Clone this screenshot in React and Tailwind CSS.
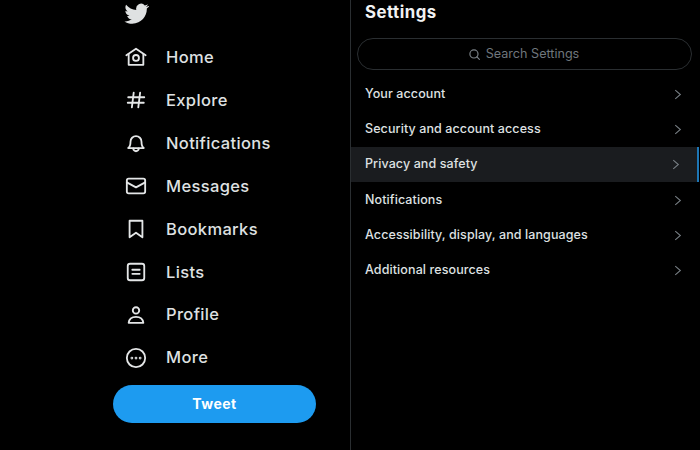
const F = { fontFamily: 'Inter, "Liberation Sans", sans-serif' };
const I = ({ children }) => (
  <svg viewBox="0 0 24 24" width="22" height="22" fill="none" stroke="#e4e6e7" strokeWidth="2" strokeLinecap="round" strokeLinejoin="round">{children}</svg>
);
const nav = [
  ['Home', <I><path d="M1.500 10 12 3 22.500 10" /><path d="M4 8.500V20.500H20V8.500" /><circle cx="12" cy="13" r="3.200" /></I>],
  ['Explore', <I><path d="M9.500 4 7.500 20M16.500 4l-2 16M3.500 9h17.500M3 15h17.500" /></I>],
  ['Notifications', <I><path d="M3.500 17.500c1.500-1 2.500-2.500 2.500-7a6 6 0 0 1 12 0c0 4.500 1 6 2.500 7Z" /><path d="M9 18c0 1.600 1.400 3 3 3s3-1.400 3-3" /></I>],
  ['Messages', <I><rect x="2" y="4" width="20" height="16" rx="2" /><path d="M2 8 12 13.500 22 8" /></I>],
  ['Bookmarks', <I><path d="M5 3H19V21L12 16 5 21Z" /></I>],
  ['Lists', <I><rect x="3" y="3" width="18" height="18" rx="2.500" /><path d="M8 9.500H16M8 14H16" /></I>],
  ['Profile', <I><circle cx="12" cy="7" r="3.500" /><path d="M4 20.500c.5-4.500 3.500-6.500 8-6.500s7.500 2 8 6.500Z" /></I>],
  ['More', <I><circle cx="12" cy="12" r="10" /><circle cx="7.500" cy="12" r=".5" /><circle cx="12" cy="12" r=".5" /><circle cx="16.500" cy="12" r=".5" /></I>],
];
const rows = ['Your account', 'Security and account access', 'Privacy and safety', 'Notifications', 'Accessibility, display, and languages', 'Additional resources'];

export default function App() {
  return (
    <div className="flex w-[700px] h-[450px] overflow-hidden bg-black text-[#dfe1e2]" style={F}>
      <aside className="w-[351px] shrink-0 border-r border-[#2a2e31] pl-[113px] flex flex-col">
        <div className="h-[36px] pl-[11px] pt-[1px]">
          <svg viewBox="0 0 24 24" width="25" height="25" fill="#dfe1e2"><path d="M23.600 4.900c-.8.400-1.800.600-2.700.8 1-.6 1.700-1.500 2.100-2.600-.9.500-1.900.900-3 1.100a4.800 4.800 0 0 0-8.200 4.400C7.900 8.400 4.400 6.500 2 3.600c-1.300 2.200-.6 5 1.500 6.400-.8 0-1.500-.2-2.200-.6 0 2.300 1.600 4.300 3.900 4.800-.7.200-1.400.2-2.200.1.600 1.900 2.400 3.300 4.500 3.300a9.700 9.700 0 0 1-7.100 2c2.200 1.400 4.800 2.200 7.500 2.200 9.100 0 14.300-7.700 14-14.600 1-.7 1.800-1.500 2.500-2.500z" /></svg>
        </div>
        <nav className="flex flex-col">
          {nav.map(([label, icon]) => (
            <div key={label} className="h-[42.900px] flex items-center gap-[19px] pl-[12px]">
              <span className="w-[22px] h-[22px] shrink-0">{icon}</span>
              <span className="text-[16.500px] font-medium tracking-[0.35px]">{label}</span>
            </div>
          ))}
        </nav>
        <button className="mt-[6px] w-[203px] h-[38px] rounded-full bg-[#1d9bf0] text-white text-[14px] font-bold tracking-[0.5px] pb-[1px]">Tweet</button>
      </aside>
      <main className="flex-1 min-w-0 flex flex-col">
        <h1 className="h-[26px] pl-[14px] flex items-center text-[16.800px] font-bold tracking-[0.5px] text-[#f1f2f3]">Settings</h1>
        <div className="mt-[12px] ml-[6px] w-[335px] h-[32px] rounded-full border border-[#2a2e31] flex items-center justify-center gap-[5px] pr-[2px] text-[#6f767c] text-[12.600px]">
          <svg viewBox="0 0 24 24" width="13" height="13" fill="none" stroke="#7a8187" strokeWidth="2.200" strokeLinecap="round"><circle cx="11" cy="11" r="7.500" /><path d="M16.500 16.500 21 21" /></svg>
          <span>Search Settings</span>
        </div>
        <div className="mt-[6.500px] flex flex-col w-[348px]">
          {rows.map((r, i) => (
            <div key={r} className={`h-[35.300px] pl-[14px] pr-[17px] flex items-center justify-between text-[12.500px] font-medium tracking-[0.1px] ${i === 2 ? 'bg-[#1a1c1f] border-r-2 border-[#1d76b5]' : ''}`}>
              <span>{r}</span>
              <svg viewBox="0 0 10 14" width="8" height="11" fill="none" stroke="#7a8187" strokeWidth="1.300"><path d="M1.500 1.500 8 7 1.500 12.500" /></svg>
            </div>
          ))}
        </div>
      </main>
    </div>
  );
}
